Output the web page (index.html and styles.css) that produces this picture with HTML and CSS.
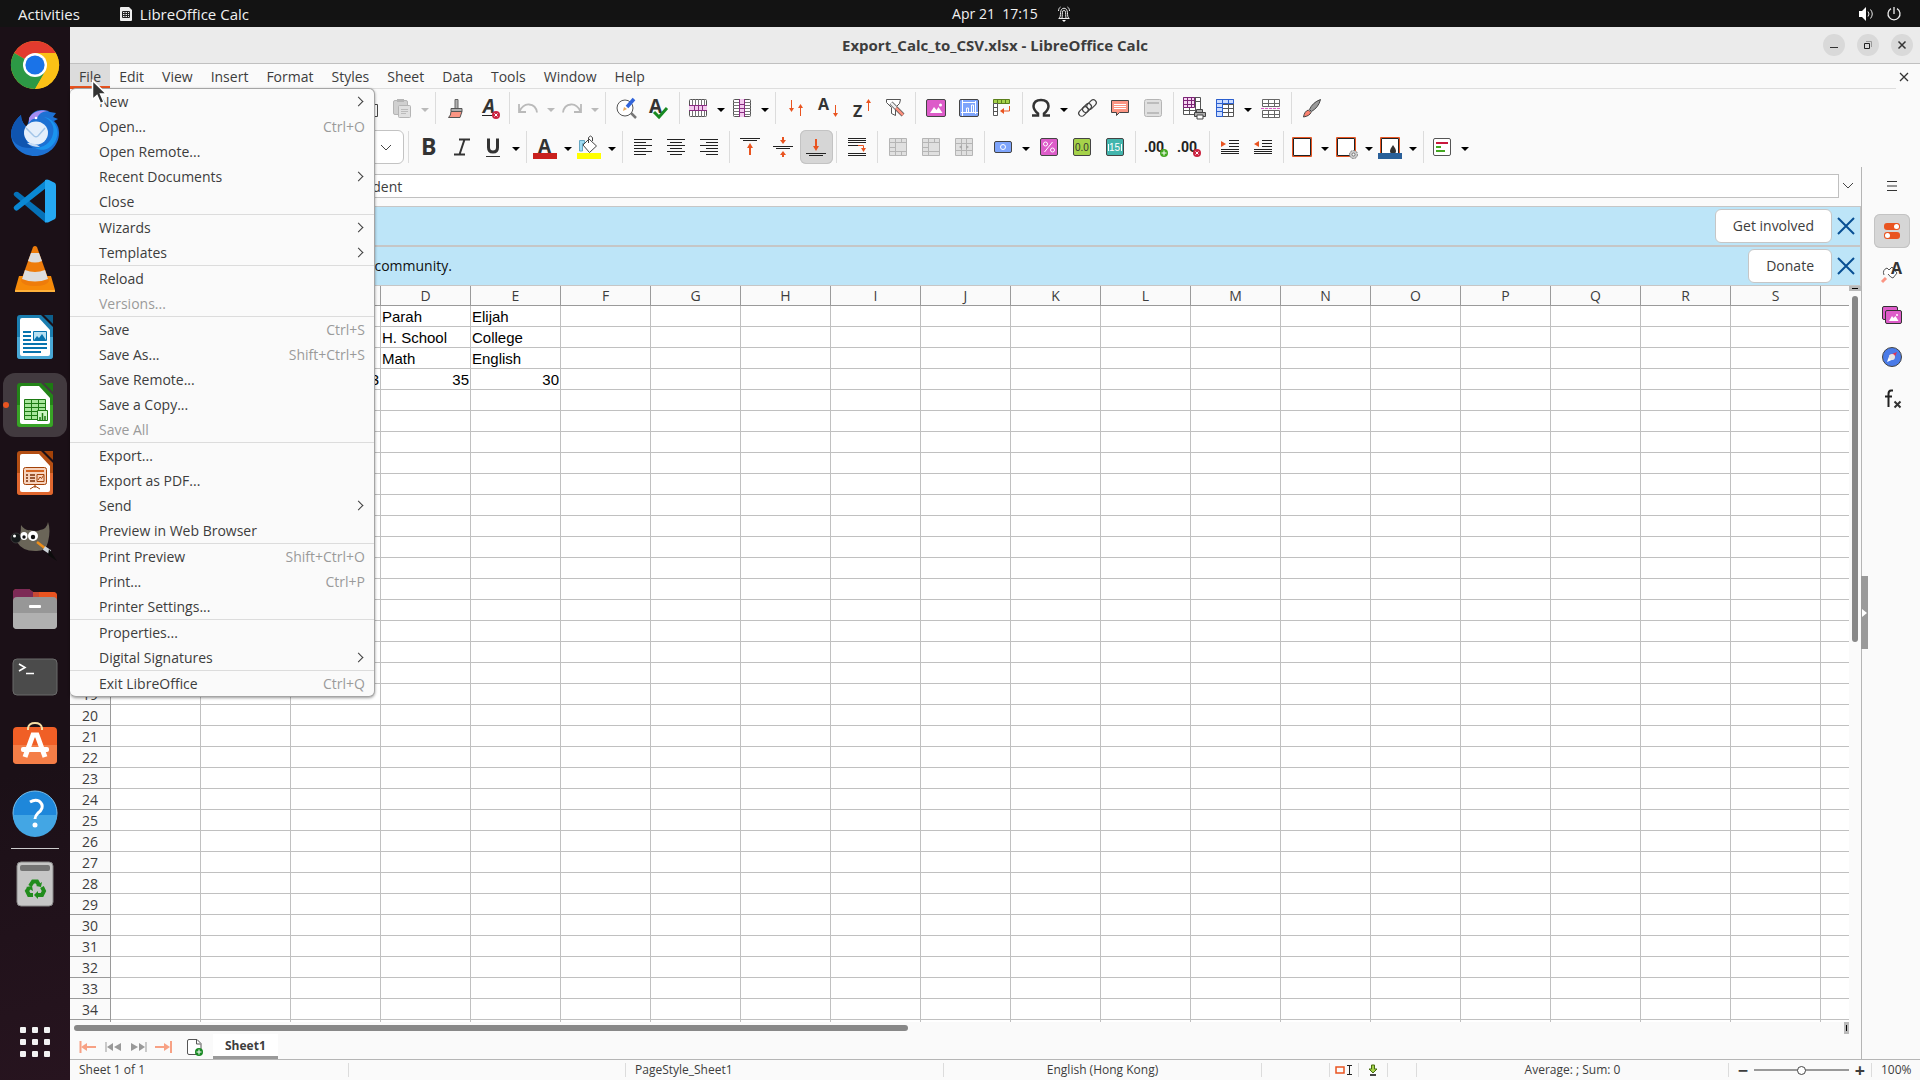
FILE: index.html
```
<!DOCTYPE html>
<html lang="en">
  <head>
    <meta charset="UTF-8" />
    <meta name="viewport" content="width=device-width, initial-scale=1.0" />
    <title>Export_Calc_to_CSV.xlsx - LibreOffice Calc</title>
    <link rel="stylesheet" href="styles.css">
  </head>
  <body>
    <header class="topbar">
      <div class="topbar-left">
        <button class="top-button">Activities</button>
        <button class="top-button app-button">
          <svg width="12" height="14" viewBox="0 0 12 14"><path d="M1 0h8l3 3v10a1 1 0 0 1-1 1H1a1 1 0 0 1-1-1V1a1 1 0 0 1 1-1z" fill="#eee"/><path d="M2.500 4.500h7v6h-7zM2.500 6.500h7M2.500 8.500h7M5 4.500v6M7.500 4.500v6" fill="none" stroke="#222"/></svg>
          LibreOffice Calc
        </button>
      </div>
      <div class="topbar-center">
        <button class="top-button clock">Apr 21&nbsp; 17:15</button>
        <svg width="14" height="16" viewBox="0 0 14 16"><path d="M1.500 12.500h11M2.500 12c1.500-2 .5-5 1.500-7.500 1-3 5-3 6 0 1 2.500 0 5.500 1.500 7.500M5 12c.5-2 0-5 .8-7 .5-1 1.900-1 2.400 0 .8 2 .3 5 .8 7M1.500 5c0-2 1-3.500 2-4M12.500 5c0-2-1-3.500-2-4" fill="none" stroke="#eee"/><path d="M5 14h4l-2 2z" fill="#fff"/></svg>
      </div>
      <div class="topbar-right">
        <svg width="16" height="14" viewBox="0 0 16 14"><path d="M0 4h3l4-4v14l-4-4H0z" fill="#fff"/><path d="M9 4.500q2 2.500 0 5M11.500 2.500q3.500 4.500 0 9" fill="none" stroke="#eee"/></svg>
        <svg width="14" height="14" viewBox="0 0 14 14"><path d="M4 1.600a6 6 0 1 0 6 0M7 0v7" fill="none" stroke="#eee" stroke-width="1.300"/></svg>
      </div>
    </header>

    <div class="desktop">
      <nav class="dock" aria-label="Dock">
        <button class="dock-item" aria-label="Chrome">
          <svg width="48" height="48" viewBox="0 0 48 48"><circle cx="24" cy="24" r="24" fill="#fbc116"/><path d="M24 24 3.200 12A24 24 0 0 1 44.800 12z" fill="#e33b2e"/><path d="M24 24 3.200 12A24 24 0 0 0 24 48l10.400-18z" fill="#2c9945"/><path d="M13.600 30A12 12 0 0 0 34.400 30L24 48z" fill="#2c9945"/><path d="M24 12h20.800A24 24 0 0 1 24 48l10.400-18z" fill="#fbc116"/><circle cx="24" cy="24" r="12" fill="#fff"/><circle cx="24" cy="24" r="9.600" fill="#1a73e8"/></svg>
        </button>
        <button class="dock-item" aria-label="Thunderbird">
          <svg width="48" height="48" viewBox="0 0 48 48"><path d="M10 6C2 13 0 20 0 26c1 12 11 21 24 21s24-10 24-23c0-6-2-9-5-12l4-2-5-2 3-4-6-1c-9-4-18-2-21 7l-2 8c-3-2-6-7-6-12z" fill="#1d71d3"/><path d="M10 6c0 5 3 10 6 13-3 7-2 15 6 20C8 40 0 33 0 24c1-7 4-13 10-18z" fill="#0f55b0"/><path d="M18 9c5-8 14-8 20-7-8 0-11 4-12 8-3-1-6 0-8 4z" fill="#a58df2"/><path d="M33 8c7 3 11 9 9 17-2 9-10 14-18 14 14 7 25-8 22-19-2-7-7-11-13-12z" fill="#1a94ee"/><ellipse cx="25" cy="24" rx="12" ry="11.500" fill="#e5effb"/><path d="m15 19 8 8q2 1.500 4 0l7-8" fill="none" stroke="#a2c5e8" stroke-width="1.500"/><path d="M20 34q6 1 9 4-9 0-13-4z" fill="#c8ddf5"/><circle cx="25" cy="9" r="1.300" fill="#fff"/></svg>
        </button>
        <button class="dock-item" aria-label="Visual Studio Code">
          <svg width="48" height="48" viewBox="0 0 48 48"><path d="M3 16q2-2 4-1l28 22v9L3.500 19q-1.500-1.500-.5-3z" fill="#0571b8"/><path d="M3 32q2 3 4 1l28-22V3L3.500 29q-1.500 1.500-.5 3z" fill="#0a88d4"/><path d="M34 3q2-1 4 0l6 3q1 1 1 3v30q0 2-1 3l-6 3q-2 1-4 0z" fill="#25a8f2"/></svg>
        </button>
        <button class="dock-item" aria-label="VLC">
          <svg width="48" height="48" viewBox="0 0 48 48"><path d="M8 31h32l4 14q0 2-2 2H6q-2 0-2-2z" fill="#f68a09"/><path d="M4 45h40v2H4z" fill="#ffb13b"/><path d="M22 2q2-2 4 0l12 34q-2 5-14 5t-14-5z" fill="#ee7c0b"/><path d="M20 8h8l3 8q-7 3-14 0zM14 25q10 4 20 0l3 9q-13 5-26 0z" fill="#ddd"/></svg>
        </button>
        <button class="dock-item" aria-label="LibreOffice Writer">
          <svg width="48" height="48" viewBox="0 0 48 48"><path d="M9 2h21l12 12v29q0 3-3 3H9q-3 0-3-3V5q0-3 3-3z" fill="#1b7eb0"/><path d="M6 24h36v19q0 3-3 3H9q-3 0-3-3z" fill="#49a8d6"/><path d="M33 2h9v9z" fill="#0d5f8c"/><path d="M11 5h17l11 12v24q0 2-2 2H11q-2 0-2-2V7q0-2 2-2z" fill="#fff"/><path d="M12 19h8M12 23h8M12 27h8M12 31h24M12 35h24M12 39h18" stroke="#0874ae" stroke-width="2"/><path d="M22.500 18.500h13v9h-13z" fill="#b7e0f2" stroke="#0874ae"/><path d="m23 27 3-4 2 2 3-4 4 6z" fill="#0874ae"/></svg>
        </button>
        <button class="dock-item active" aria-label="LibreOffice Calc">
          <svg width="48" height="48" viewBox="0 0 48 48"><path d="M9 2h21l12 12v29q0 3-3 3H9q-3 0-3-3V5q0-3 3-3z" fill="#238418"/><path d="M6 24h36v19q0 3-3 3H9q-3 0-3-3z" fill="#38a426"/><path d="M33 2h9v9z" fill="#1c7a12"/><path d="M11 5h17l11 12v24q0 2-2 2H11q-2 0-2-2V7q0-2 2-2z" fill="#fff"/><path d="M13.500 18.500h21v20h-21zM13.500 22.500h21M13.500 26.500h21M13.500 30.500h21M13.500 34.500h21M20.500 18v20M27.500 18v20" fill="#a6e69a" stroke="#1c7a12"/><path d="M26.500 29.500h10v10h-10z" fill="#ccf4c4" stroke="#1c7a12"/><path d="M29 39v-3M31.500 39v-7M34 39v-4" stroke="#1c7a12" stroke-width="1.500"/></svg>
        </button>
        <button class="dock-item" aria-label="LibreOffice Impress">
          <svg width="48" height="48" viewBox="0 0 48 48"><path d="M9 2h21l12 12v29q0 3-3 3H9q-3 0-3-3V5q0-3 3-3z" fill="#b34e13"/><path d="M6 24h36v19q0 3-3 3H9q-3 0-3-3z" fill="#e0672f"/><path d="M33 2h9v9z" fill="#a34208"/><path d="M11 5h17l11 12v24q0 2-2 2H11q-2 0-2-2V7q0-2 2-2z" fill="#fff"/><rect x="12.500" y="18.500" width="23" height="17" rx="2" fill="#f6d3bd" stroke="#a34208"/><path d="M15 22h18" stroke="#d2621f" stroke-width="2"/><path d="M15 26h2M15 29h2M15 32h2M19 26h5M19 29h5M19 32h5" stroke="#7a2e05" stroke-width="1.500"/><path d="M26 25.500h7v7h-7zM27 31l2-3 1.500 1.500 2-3M24 36v3M24 37l-5 3M24 37l5 3" fill="none" stroke="#a34208"/></svg>
        </button>
        <button class="dock-item" aria-label="GIMP">
          <svg width="48" height="48" viewBox="0 0 48 48"><path d="M10 8q4 6 9 5 7 2 10 0 7-1 8-8 3 8 0 20-2 10-13 9Q11 34 6 25q4-5 4-17z" fill="#6a6558"/><circle cx="5" cy="21" r="5" fill="#15181a" stroke="#555" stroke-width=".5"/><circle cx="3.500" cy="19" r="1.500" fill="#fff"/><ellipse cx="13" cy="19" rx="3.500" ry="4" fill="#fff"/><circle cx="22" cy="19" r="5" fill="#fff"/><circle cx="13" cy="20" r="1.700" fill="#111"/><circle cx="22" cy="20" r="2.200" fill="#111"/><path d="m26 25 9 7" stroke="#ee8e1a" stroke-width="2.500"/><path d="m33 31 6 4" stroke="#ccd3d8" stroke-width="4"/><path d="m38 32 8 12-9-6z" fill="#0c0c0c"/></svg>
        </button>
        <button class="dock-item" aria-label="Files">
          <svg width="48" height="48" viewBox="0 0 48 48"><path d="M2 8q0-4 4-4h12l4 3h20q4 0 4 4v9H2z" fill="#c74a36"/><path d="M2 8q0-4 4-4h12l4 3v8H2z" fill="#7d2a56"/><path d="M28 7h14q4 0 4 4v4H28z" fill="#e95420"/><rect x="2" y="12" width="44" height="32" rx="4" fill="#979797"/><path d="M2 28h44v12q0 4-4 4H6q-4 0-4-4z" fill="#b0b0b0"/><rect x="18" y="20" width="12" height="3" rx="1" fill="#fff"/></svg>
        </button>
        <button class="dock-item" aria-label="Terminal">
          <svg width="48" height="48" viewBox="0 0 48 48"><rect x="2" y="6" width="44" height="36" rx="4" fill="#4b4b4b" stroke="#6a6a6a"/><path d="m8 11 6 3.500L8 18M15 20.500h8" fill="none" stroke="#fff" stroke-width="1.600"/></svg>
        </button>
        <button class="dock-item" aria-label="Ubuntu Software">
          <svg width="48" height="48" viewBox="0 0 48 48"><rect x="2" y="6" width="44" height="37" rx="4" fill="#f05f26"/><path d="M2 24h44v15q0 4-4 4H6q-4 0-4-4z" fill="#f47e47"/><path d="M17 9V7q1-5 7-5t7 5v2" fill="none" stroke="#f8dfa5" stroke-width="2"/><path d="m14 36 8-22h4l8 22" fill="none" stroke="#fff" stroke-width="5"/><rect x="10" y="26" width="28" height="5" rx="2" fill="#fff"/></svg>
        </button>
        <button class="dock-item" aria-label="Help">
          <svg width="48" height="48" viewBox="0 0 48 48"><circle cx="24" cy="24" r="22" fill="#1e87da" stroke="#79c1ef"/><path d="M2 26h44a22 22 0 0 1-44 0z" fill="#43a6e4"/><path d="M19 13q5-3 9-1 4 3 3 7-1 3-4 5-3 3-3 6" fill="none" stroke="#fff" stroke-width="3"/><circle cx="24" cy="36" r="2.500" fill="#fff"/></svg>
        </button>
        <div class="dock-separator"></div>
        <button class="dock-item" aria-label="Trash">
          <svg width="48" height="48" viewBox="0 0 48 48"><rect x="6" y="2" width="36" height="44" rx="4" fill="#c6c6c6" stroke="#888"/><rect x="9" y="5" width="30" height="6" rx="2" fill="#747474"/><g fill="none" stroke="#218c1c" stroke-width="4"><path d="m19 26 3-4.500h4l2 3.500M31 27l2 4-2 4h-5M22 35h-4l-2-4 2-3"/></g><path d="m25 26 5 1 1-5zM27 31v8l-4-4zM15 27l6-1 1 5z" fill="#218c1c"/></svg>
        </button>
        <button class="dock-item show-apps" aria-label="Show Applications">
          <svg width="30" height="30" viewBox="0 0 30 30" fill="#f2f2f2"><rect width="6" height="6" rx="1"/><rect x="12" width="6" height="6" rx="1"/><rect x="24" width="6" height="6" rx="1"/><rect y="12" width="6" height="6" rx="1"/><rect x="12" y="12" width="6" height="6" rx="1"/><rect x="24" y="12" width="6" height="6" rx="1"/><rect y="24" width="6" height="6" rx="1"/><rect x="12" y="24" width="6" height="6" rx="1"/><rect x="24" y="24" width="6" height="6" rx="1"/></svg>
        </button>
      </nav>

      <main class="window">
        <div class="titlebar">
          <h1>Export_Calc_to_CSV.xlsx - LibreOffice Calc</h1>
          <div class="window-buttons">
            <button aria-label="Minimize"><svg width="10" height="10" viewBox="0 0 10 10"><path d="M1 7.500h8" stroke="#333"/></svg></button>
            <button aria-label="Restore"><svg width="10" height="10" viewBox="0 0 10 10"><path d="M1.500 3.500h5v5h-5z" fill="none" stroke="#222"/><path d="M3 1.500h5.500V7" fill="none" stroke="#999"/></svg></button>
            <button aria-label="Close"><svg width="10" height="10" viewBox="0 0 10 10"><path d="m1.500 1.500 7 7m0-7-7 7" stroke="#333" stroke-width="1.500"/></svg></button>
          </div>
        </div>

        <div class="menubar">
          <div class="menus">
            <button class="menu-button open">File</button>
            <button class="menu-button">Edit</button>
            <button class="menu-button">View</button>
            <button class="menu-button">Insert</button>
            <button class="menu-button">Format</button>
            <button class="menu-button">Styles</button>
            <button class="menu-button">Sheet</button>
            <button class="menu-button">Data</button>
            <button class="menu-button">Tools</button>
            <button class="menu-button">Window</button>
            <button class="menu-button">Help</button>
          </div>
          <button class="close-document" aria-label="Close document"><svg width="10" height="10" viewBox="0 0 10 10"><path d="m1 1 8 8m0-8-8 8" stroke="#333" stroke-width="1.300"/></svg></button>

          <ul class="file-menu">
            <li><button>New<span class="arrow"></span></button></li>
            <li><button>Open...<kbd>Ctrl+O</kbd></button></li>
            <li><button>Open Remote...</button></li>
            <li><button>Recent Documents<span class="arrow"></span></button></li>
            <li><button>Close</button></li>
            <li class="group"><button>Wizards<span class="arrow"></span></button></li>
            <li><button>Templates<span class="arrow"></span></button></li>
            <li class="group"><button>Reload</button></li>
            <li><button disabled>Versions...</button></li>
            <li class="group"><button>Save<kbd>Ctrl+S</kbd></button></li>
            <li><button>Save As...<kbd>Shift+Ctrl+S</kbd></button></li>
            <li><button>Save Remote...</button></li>
            <li><button>Save a Copy...</button></li>
            <li><button disabled>Save All</button></li>
            <li class="group"><button>Export...</button></li>
            <li><button>Export as PDF...</button></li>
            <li><button>Send<span class="arrow"></span></button></li>
            <li><button>Preview in Web Browser</button></li>
            <li class="group"><button>Print Preview<kbd>Shift+Ctrl+O</kbd></button></li>
            <li><button>Print...<kbd>Ctrl+P</kbd></button></li>
            <li><button>Printer Settings...</button></li>
            <li class="group"><button>Properties...</button></li>
            <li><button>Digital Signatures<span class="arrow"></span></button></li>
            <li class="group"><button>Exit LibreOffice<kbd>Ctrl+Q</kbd></button></li>
          </ul>
          <svg class="pointer" width="18" height="26" viewBox="0 0 18 26"><path d="M1.500 1.500v19l4.500-4 3.500 8 3.500-1.500-3.500-8h6z" fill="#333" stroke="#fff" stroke-width="1.500"/></svg>
        </div>

        <!-- standard toolbar -->
        <div class="toolbar standard">
          <button class="tool" aria-label="Copy"><svg viewBox="0 0 24 24"><path d="M3.500 3.500h9v12h-9zM8.500 8.500h10v12h-10z" fill="#fff" stroke="#444"/><path d="M11 12.500h5M11 15.500h5" stroke="#9c8fd0"/></svg></button>
          <button class="tool split" aria-label="Paste"><svg viewBox="0 0 24 24"><rect x="3.500" y="4.500" width="14" height="14" rx="1.500" fill="#d0d0d0" stroke="#b5b5b5"/><path d="M7 3h7v3H7z" fill="#b5b5b5"/><rect x="8.500" y="9.500" width="12" height="12" rx="1" fill="#e0e0e0" stroke="#b5b5b5"/><path d="M11 13.500h7M11 15.500h7M11 17.500h5" stroke="#bbb"/></svg><i class="caret dim"></i></button>
          <span class="separator"></span>
          <button class="tool" aria-label="Clone Formatting"><svg viewBox="0 0 24 24"><path d="M11 3.500h3v9h-3z" fill="#b0b0b0" stroke="#666"/><path d="M7 12.500h11v3H7z" fill="#b0b0b0" stroke="#555"/><path d="M7 15.500h11l-2 6H4.500q2.500-2 2.500-6z" fill="#fb9583" stroke="#555"/></svg></button>
          <button class="tool" aria-label="Clear Formatting"><svg viewBox="0 0 24 24"><text x="6" y="17" class="glyph slanted">A</text><path d="M5 19.500h12" stroke="#222"/><circle cx="19" cy="19" r="4" fill="#cb2440"/><path d="m17.500 17.500 3 3m0-3-3 3" stroke="#fff"/></svg></button>
          <span class="separator"></span>
          <button class="tool split" aria-label="Undo"><svg viewBox="0 0 24 24"><path d="M3 8v8h7M3.500 15.500Q7 8 13 8.500q7 .5 8 8" fill="none" stroke="#bababa" stroke-width="1.800"/></svg><i class="caret dim"></i></button>
          <button class="tool split" aria-label="Redo"><svg viewBox="0 0 24 24"><path d="M21 8v8h-7M20.500 15.500Q17 8 11 8.500q-7 .5-8 8" fill="none" stroke="#bababa" stroke-width="1.800"/></svg><i class="caret dim"></i></button>
          <span class="separator"></span>
          <button class="tool" aria-label="Find and Replace"><svg viewBox="0 0 24 24"><circle cx="11" cy="12" r="8" fill="#fff" stroke="#555"/><path d="m17 17 5 5" stroke="#777" stroke-width="2.500"/><path d="m13 11 7-8" stroke="#3164d9" stroke-width="3.500"/><path d="m9 15 1-4 3 2z" fill="#e9a95c"/></svg></button>
          <button class="tool" aria-label="Spelling"><svg viewBox="0 0 24 24"><text x="2" y="17" class="glyph">A</text><path d="m7 16 5 5 8-9" fill="none" stroke="#188a22" stroke-width="3"/></svg></button>
          <span class="separator"></span>
          <button class="tool split" aria-label="Row"><svg viewBox="0 0 24 24"><rect x="3.500" y="3.500" width="17" height="17" rx="1" fill="#fff" stroke="#555"/><path d="M6.500 3v18M9.500 3v18M12.500 3v18M15.500 3v18M18.500 3v18" stroke="#777"/><path d="M3 9.500h18v5H3z" fill="#f3c9ee"/><path d="M3 9.500h18M3 14.500h18M8.500 10v4M12.500 10v4M16.500 10v4" stroke="#8a2c82"/></svg><i class="caret"></i></button>
          <button class="tool split" aria-label="Column"><svg viewBox="0 0 24 24"><rect x="3.500" y="3.500" width="17" height="17" rx="1" fill="#fff" stroke="#555"/><path d="M3 6.500h18M3 9.500h18M3 12.500h18M3 15.500h18M3 18.500h18" stroke="#777"/><path d="M9.500 3h5v18h-5z" fill="#f3c9ee"/><path d="M9.500 3v18M14.500 3v18M10 8.500h4M10 12.500h4M10 16.500h4" stroke="#8a2c82"/></svg><i class="caret"></i></button>
          <span class="separator"></span>
          <button class="tool" aria-label="Sort"><svg viewBox="0 0 24 24"><path d="M7.500 4v10M16.500 20V10" stroke="#e95420"/><path d="M5 12h5l-2.500 4zM14 12h5l-2.500-4z" fill="#e95420"/></svg></button>
          <button class="tool" aria-label="Sort Ascending"><svg viewBox="0 0 24 24"><text x="1" y="14" class="glyph small">A</text><path d="M18.500 9v11" stroke="#e95420"/><path d="M16 17h5l-2.500 4z" fill="#e95420"/></svg></button>
          <button class="tool" aria-label="Sort Descending"><svg viewBox="0 0 24 24"><text x="3" y="21" class="glyph small">Z</text><path d="M18.500 15V5" stroke="#e95420"/><path d="M16 7h5l-2.500-4z" fill="#e95420"/></svg></button>
          <button class="tool" aria-label="AutoFilter"><svg viewBox="0 0 24 24"><path d="M3.500 3.500h14l-1 4-4 4v8l-4-2v-6l-5-5z" fill="#fff" stroke="#555"/><path d="m8 7 12 12" stroke="#555" stroke-width="4"/><path d="m8 7 5 5" stroke="#eee" stroke-width="2.500"/><path d="m13 12 7 7" stroke="#fb8f7d" stroke-width="2.500"/></svg></button>
          <span class="separator"></span>
          <button class="tool" aria-label="Image"><svg viewBox="0 0 24 24"><rect x="2.500" y="3.500" width="19" height="17" rx="1.500" fill="#dd5cc9" stroke="#444"/><path d="m6 17 4-6 2.500 3 2-3 4 6z" fill="#fff"/><circle cx="16.500" cy="9" r="1.500" fill="#fff"/></svg></button>
          <button class="tool" aria-label="Chart"><svg viewBox="0 0 24 24"><rect x="2.500" y="3.500" width="19" height="17" rx="1.500" fill="#7ea4fb" stroke="#444"/><path d="M5.500 6.500h13v10h-13zM9.500 16v-4h2v4M14.500 16V9h2v7M5.500 4v16M4 16.500h17M18.500 5v13" fill="none" stroke="#fff"/></svg></button>
          <button class="tool" aria-label="Pivot Table"><svg viewBox="0 0 24 24"><path d="M3.500 3.500h16v4h-16zM7.500 3.500v4M11.500 3.500v4M15.500 3.500v4" fill="#a5d24a" stroke="#5b7f1c"/><path d="M3.500 7.500h4v12h-4zM3.500 11.500h4M3.500 15.500h4" fill="#fff" stroke="#555"/><path d="M19.500 10v5h-7" fill="none" stroke="#e95420"/><path d="m14 12-4 3 4 3z" fill="#e95420"/></svg></button>
          <span class="separator"></span>
          <button class="tool split" aria-label="Special Character"><svg viewBox="0 0 24 24"><path d="M3 19.500h6v-2Q4.500 14 4.500 10 5 4 12 4t7.500 6q0 4-4.500 7.500v2h6" fill="none" stroke="#333" stroke-width="2.500"/></svg><i class="caret"></i></button>
          <button class="tool" aria-label="Hyperlink"><svg viewBox="0 0 24 24" fill="none" stroke="#444" stroke-width="1.200"><rect x="11" y="5.500" width="11" height="6" rx="3" transform="rotate(-45 16.500 8.500)"/><rect x="7" y="9" width="10" height="6" rx="3" transform="rotate(-45 12 12)"/><rect x="3" y="12.500" width="11" height="6" rx="3" transform="rotate(-45 8.500 15.500)"/></svg></button>
          <button class="tool" aria-label="Comment"><svg viewBox="0 0 24 24"><path d="M3.500 4.500h17v12h-9l-3 3v-3h-5z" fill="#fb9583" stroke="#444"/><path d="M6 8.500h12M6 10.500h12M6 12.500h12" stroke="#fff"/></svg></button>
          <button class="tool" aria-label="Headers and Footers"><svg viewBox="0 0 24 24"><rect x="3.500" y="3.500" width="17" height="17" rx="2" fill="#e0e0e0" stroke="#b5b5b5"/><path d="M6 7h12M6 17h12" stroke="#bcbcbc" stroke-width="2"/></svg></button>
          <span class="separator"></span>
          <button class="tool" aria-label="Define Print Area"><svg viewBox="0 0 24 24"><path d="M1.500 1.500h17v17h-17zM1.500 14.500h17M7.500 10v8M13.500 2v16M13 5.500h5" fill="#fff" stroke="#555"/><path d="M1.500 1.500h11v10h-11zM1.500 4.500h11M1.500 8.500h11M5.500 1.500v10M9.500 1.500v10" fill="#f6d5f2" stroke="#7d2477"/><path d="M14.500 13.500h6v3h-6zM12.500 16.500h11v4h-11z" fill="#aaa" stroke="#444"/><path d="M15 19h6v4h-6z" fill="#fff" stroke="#444"/></svg></button>
          <button class="tool split" aria-label="Freeze Rows and Columns"><svg viewBox="0 0 24 24"><path d="M3.500 3.500h17v17h-17zM9 12.500h12M9 16.500h12M15.500 7v13M9 8.500h12" fill="#fff" stroke="#555"/><path d="M3.500 3.500h17v4h-11v13h-6zM3.500 7.500h6M3.500 11.500h6M3.500 15.500h6M9.500 3.500v4M15.500 3.500v4" fill="#cbdcff" stroke="#2b5fd0"/></svg><i class="caret"></i></button>
          <button class="tool" aria-label="Split Window"><svg viewBox="0 0 24 24"><path d="M3.500 3.500h17v7h-17zM3.500 7.500h17M9.500 3.500v7M15.500 3.500v7M3.500 14.500h17v7h-17zM3.500 18.500h17M9.500 14.500v7M15.500 14.500v7" fill="#fff" stroke="#666"/><path d="M2 12.500h20" stroke="#dd5cc9" stroke-dasharray="3 1"/></svg></button>
          <span class="separator"></span>
          <button class="tool" aria-label="Show Draw Functions"><svg viewBox="0 0 24 24"><path d="M20.500 3.500q-8 3-11 10l2 2q7-4 9-12z" fill="#9a9a9a" stroke="#444"/><path d="M8.500 14q-4 1-5 7 6-1 7.500-4.500z" fill="#fb8270" stroke="#444"/></svg></button>
        </div>

        <!-- formatting toolbar -->
        <div class="toolbar formatting">
          <label class="font-size"><select aria-label="Font size"><option></option></select><svg width="12" height="8" viewBox="0 0 12 8"><path d="m1 1 5 5 5-5" fill="none" stroke="#444"/></svg></label>
          <span class="separator"></span>
          <button class="tool" aria-label="Bold"><svg viewBox="0 0 24 24"><text x="4" y="20" class="glyph large">B</text></svg></button>
          <button class="tool" aria-label="Italic"><svg viewBox="0 0 24 24"><path d="M9 4.500h11M4 19.500h11M14.500 4.500l-5 15" fill="none" stroke="#333" stroke-width="2"/></svg></button>
          <button class="tool split" aria-label="Underline"><svg viewBox="0 0 24 24"><path d="M7.500 3.500v9q0 4.500 4.500 4.500t4.500-4.500v-9" fill="none" stroke="#333" stroke-width="3"/><path d="M5 21.500h14" stroke="#333"/></svg><i class="caret"></i></button>
          <span class="separator"></span>
          <button class="tool split" aria-label="Font Color"><svg viewBox="0 0 24 24"><text x="5" y="18" class="glyph">A</text><path d="M0 18h24v6H0z" fill="#c9211e"/></svg><i class="caret"></i></button>
          <button class="tool split" aria-label="Background Color"><svg viewBox="0 0 24 24"><path d="M2.500 16V5.500h5v3h-2V16z" fill="#9fdcf3" stroke="#67a8c4"/><path d="m6 10 6-6 7.500 7-7 6.500zM11.500 8V2.500q2-3 4 0V6" fill="#fff" stroke="#444"/><path d="M0 18h24v6H0z" fill="#ff0"/></svg><i class="caret"></i></button>
          <span class="separator"></span>
          <button class="tool" aria-label="Align Left"><svg viewBox="0 0 24 24"><path d="M3 4.500h18M3 7.500h12M3 10.500h18M3 13.500h12M3 16.500h18M3 19.500h12" stroke="#222"/></svg></button>
          <button class="tool" aria-label="Center Horizontally"><svg viewBox="0 0 24 24"><path d="M3 4.500h18M6 7.500h12M3 10.500h18M6 13.500h12M3 16.500h18M6 19.500h12" stroke="#222"/></svg></button>
          <button class="tool" aria-label="Align Right"><svg viewBox="0 0 24 24"><path d="M3 4.500h18M9 7.500h12M3 10.500h18M9 13.500h12M3 16.500h18M9 19.500h12" stroke="#222"/></svg></button>
          <span class="separator"></span>
          <button class="tool" aria-label="Align Top"><svg viewBox="0 0 24 24"><path d="M2 3.500h20M5 5.500h14" stroke="#222"/><path d="M12 20v-9" stroke="#e95420" stroke-width="2"/><path d="M9 13h6l-3-5z" fill="#e95420"/></svg></button>
          <button class="tool" aria-label="Center Vertically"><svg viewBox="0 0 24 24"><path d="M2 11.500h20M5 13.500h14" stroke="#222"/><path d="M12 2v4M12 22v-4" stroke="#e95420" stroke-width="2"/><path d="M9 5h6l-3 4zM9 20h6l-3-4z" fill="#e95420"/></svg></button>
          <button class="tool pressed" aria-label="Align Bottom"><svg viewBox="0 0 24 24"><path d="M2 18.500h20M5 20.500h14" stroke="#222"/><path d="M12 4v9" stroke="#e95420" stroke-width="2"/><path d="M9 11h6l-3 5z" fill="#e95420"/></svg></button>
          <span class="separator"></span>
          <button class="tool" aria-label="Wrap Text"><svg viewBox="0 0 24 24"><path d="M3 3.500h18M3 5.500h18M3 7.500h18M3 10.500h10M3 18.500h18M3 20.500h18" stroke="#222"/><path d="M13 10.500h5.500V14" fill="none" stroke="#e95420"/><path d="M16 13h5l-2.500 4z" fill="#e95420"/></svg></button>
          <span class="separator"></span>
          <button class="tool" aria-label="Merge and Center"><svg viewBox="0 0 24 24"><path d="M3.500 3.500h17v17h-17zM3.500 7.500h17M3.500 16.500h17M9.500 3.500v17M15.500 3.500v4M15.500 16.500v4M3.500 12.500h6" fill="#e0e0e0" stroke="#b5b5b5"/></svg></button>
          <button class="tool" aria-label="Merge Cells"><svg viewBox="0 0 24 24"><path d="M3.500 3.500h17v17h-17zM3.500 7.500h17M3.500 16.500h17M9.500 3.500v17M15.500 3.500v4M3.500 12.500h6" fill="#e0e0e0" stroke="#b5b5b5"/></svg></button>
          <button class="tool" aria-label="Unmerge Cells"><svg viewBox="0 0 24 24"><path d="M3.500 3.500h17v17h-17zM3.500 8.500h17M3.500 15.500h17M9.500 3.500v17M14.500 3.500v17" fill="#e0e0e0" stroke="#b5b5b5"/><path d="m7 12 3-2v4zM17 12l-3-2v4z" fill="#aaa"/></svg></button>
          <span class="separator"></span>
          <button class="tool split" aria-label="Format as Currency"><svg viewBox="0 0 24 24"><rect x="3.500" y="6.500" width="17" height="11" rx="1.500" fill="#7ea4fb" stroke="#444"/><circle cx="12" cy="12" r="2.500" fill="none" stroke="#fff"/></svg><i class="caret"></i></button>
          <button class="tool" aria-label="Format as Percent"><svg viewBox="0 0 24 24"><rect x="3.500" y="3.500" width="17" height="17" rx="1.500" fill="#dd5cc9" stroke="#444"/><path d="m7.500 17 8-10" stroke="#fff"/><circle cx="8.500" cy="9" r="2" fill="none" stroke="#fff"/><circle cx="15.500" cy="15" r="2" fill="none" stroke="#fff"/></svg></button>
          <button class="tool" aria-label="Format as Number"><svg viewBox="0 0 24 24"><rect x="3.500" y="3.500" width="17" height="17" rx="1.500" fill="#a5d24a" stroke="#444"/><text x="5" y="16" class="digits">0.0</text></svg></button>
          <button class="tool" aria-label="Format as Date"><svg viewBox="0 0 24 24"><rect x="3.500" y="3.500" width="17" height="17" rx="1.500" fill="#43b5ad" stroke="#444"/><path d="M5.500 9v7M18.500 9v7" stroke="#fff"/><text x="6" y="16" class="digits light">15</text></svg></button>
          <span class="separator"></span>
          <button class="tool" aria-label="Add Decimal Place"><svg viewBox="0 0 24 24"><text x="0" y="17" class="decimals">.00</text><circle cx="20" cy="18" r="4" fill="#43a820"/><path d="M17.500 18h5M20 15.500v5" stroke="#fff"/></svg></button>
          <button class="tool" aria-label="Delete Decimal Place"><svg viewBox="0 0 24 24"><text x="0" y="17" class="decimals">.00</text><circle cx="20" cy="18" r="4" fill="#cb2440"/><path d="m18.500 16.500 3 3m0-3-3 3" stroke="#fff"/></svg></button>
          <span class="separator"></span>
          <button class="tool" aria-label="Increase Indent"><svg viewBox="0 0 24 24"><path d="M11 5.500h10M11 8.500h10M11 11.500h10M3 14.500h18M3 16.500h18M3 18.500h18" stroke="#222"/><path d="M3 6v6l5-3z" fill="#e95420"/></svg></button>
          <button class="tool" aria-label="Decrease Indent"><svg viewBox="0 0 24 24"><path d="M11 5.500h10M11 8.500h10M11 11.500h10M3 14.500h18M3 16.500h18M3 18.500h18" stroke="#222"/><path d="M8 6v6L3 9z" fill="#e95420"/></svg></button>
          <span class="separator"></span>
          <button class="tool split" aria-label="Borders"><svg viewBox="0 0 24 24"><path d="M2.500 2.500h19v19h-19z" fill="#fff" stroke="#e95420"/><path d="M3.500 3.500h17v17h-17z" fill="none" stroke="#222"/></svg><i class="caret"></i></button>
          <button class="tool split" aria-label="Border Style"><svg viewBox="0 0 24 24"><path d="M2.500 2.500h19v19h-19z" fill="#fff" stroke="#e95420"/><path d="M3.500 3.500h17v17h-17z" fill="none" stroke="#222"/><circle cx="19.500" cy="19.500" r="4" fill="#ccc" stroke="#777" stroke-dasharray="2 1"/><circle cx="19.500" cy="19.500" r="1.500" fill="#fff" stroke="#777"/></svg><i class="caret"></i></button>
          <button class="tool split" aria-label="Border Color"><svg viewBox="0 0 24 24"><path d="M2.500 2.500h19v19h-19z" fill="#fff" stroke="#e95420"/><path d="M3.500 3.500h17v17h-17z" fill="none" stroke="#222"/><path d="M15 10q3 4 3 6a3 3 0 0 1-6 0q0-2 3-6z" fill="#333"/><path d="M0 18h24v6H0z" fill="#2a6099"/></svg><i class="caret"></i></button>
          <span class="separator"></span>
          <button class="tool split" aria-label="Conditional"><svg viewBox="0 0 24 24"><rect x="3.500" y="3.500" width="17" height="17" rx="1.500" fill="#fff" stroke="#555"/><path d="M6 8h12" stroke="#c8193c" stroke-width="2"/><path d="M6 12h5M6 16h9" stroke="#43a820" stroke-width="2"/></svg><i class="caret"></i></button>
        </div>

        <div class="workspace">
          <div class="document">
            <div class="formula-bar">
              <input type="text" value="Student" aria-label="Input line">
              <button aria-label="Expand Formula Bar"><svg width="12" height="8" viewBox="0 0 12 8"><path d="m1 1 5 5 5-5" fill="none" stroke="#444"/></svg></button>
            </div>
            <div class="infobar">
              <button class="info-button">Get involved</button>
              <button class="info-close" aria-label="Close Infobar"><svg width="16" height="16" viewBox="0 0 16 16"><path d="m0 0 16 16m0-16L0 16" stroke="#074f94" stroke-width="2"/></svg></button>
            </div>
            <div class="infobar">
              <p>Your donations support our worldwide community.</p>
              <button class="info-button">Donate</button>
              <button class="info-close" aria-label="Close Infobar"><svg width="16" height="16" viewBox="0 0 16 16"><path d="m0 0 16 16m0-16L0 16" stroke="#074f94" stroke-width="2"/></svg></button>
            </div>
            <div class="sheet-area">
              <div class="sheet-view">
                <table class="sheet" id="sheet"></table>
              </div>
              <div class="scroll-vertical">
                <span class="splitter"></span>
                <span class="thumb"></span>
              </div>
            </div>
            <div class="scroll-horizontal">
              <span class="thumb"></span>
              <span class="splitter"></span>
            </div>
            <div class="sheet-tabs">
              <button class="tab-nav" aria-label="First sheet"><svg width="18" height="12" viewBox="0 0 18 12"><path d="M1.500 0v12" stroke="#f7a184" stroke-width="2"/><path d="M5 6h12" stroke="#f7a184" stroke-width="2"/><path d="m8 2-6 4 6 4z" fill="#f7a184"/></svg></button>
              <button class="tab-nav" aria-label="Previous sheet"><svg width="18" height="12" viewBox="0 0 18 12"><path d="M2 1v10" stroke="#999"/><path d="m9 2-6 4 6 4zM17 2l-7 4 7 4z" fill="#999"/></svg></button>
              <button class="tab-nav" aria-label="Next sheet"><svg width="18" height="12" viewBox="0 0 18 12"><path d="M17 1v10" stroke="#999"/><path d="m10 2 6 4-6 4zM2 2l7 4-7 4z" fill="#999"/></svg></button>
              <button class="tab-nav" aria-label="Last sheet"><svg width="18" height="12" viewBox="0 0 18 12"><path d="M17 0v12M1 6h12" stroke="#f7a184" stroke-width="2"/><path d="m10 2 6 4-6 4z" fill="#f7a184"/></svg></button>
              <button class="tab-add" aria-label="Add sheet"><svg width="16" height="18" viewBox="0 0 16 18"><path d="M2 1.500h8l4 4V15q0 1.500-1.500 1.500H2Q.5 16.500.5 15V3Q.5 1.500 2 1.500zM9.500 2v4h4" fill="#fff" stroke="#555"/><circle cx="12" cy="14" r="4" fill="#188a22"/><path d="M9.500 14h5M12 11.500v5" stroke="#fff"/></svg></button>
              <button class="tab current">Sheet1</button>
            </div>
          </div>

          <aside class="sidebar">
            <button class="deck-handle" aria-label="Hide sidebar"></button>
            <button class="deck settings" aria-label="Sidebar Settings"><svg width="10" height="10" viewBox="0 0 10 10"><path d="M0 .5h10M0 5h10M0 9.500h10" stroke="#333"/></svg></button>
            <button class="deck pressed" aria-label="Properties"><svg width="24" height="24" viewBox="0 0 24 24"><rect x="4" y="4" width="16" height="7" rx="3" fill="#e95420"/><rect x="4" y="13" width="16" height="7" rx="3" fill="#e95420"/><circle cx="16.500" cy="7.500" r="2.500" fill="#fff"/><circle cx="7.500" cy="16.500" r="2.500" fill="#fff"/></svg></button>
            <button class="deck" aria-label="Styles"><svg width="24" height="24" viewBox="0 0 24 24"><path d="m2 21 4-4" stroke="#fb9583" stroke-width="3"/><path d="M4 14q-2-5 3-7l2 2 3-3 5 6-4 5q-2 0-5-4" fill="#fff" stroke="#555"/><text x="11" y="13" class="glyph small">A</text></svg></button>
            <button class="deck" aria-label="Gallery"><svg width="24" height="24" viewBox="0 0 24 24"><rect x="2.500" y="3.500" width="15" height="13" rx="1.500" fill="#dd5cc9" stroke="#333"/><rect x="5.500" y="7.500" width="16" height="13" rx="1.500" fill="#dd5cc9" stroke="#333"/><path d="m9 18 3-5 1.500 2 2-2 3 5z" fill="#fff"/><circle cx="17" cy="12" r="1" fill="#fff"/></svg></button>
            <button class="deck" aria-label="Navigator"><svg width="24" height="24" viewBox="0 0 24 24"><circle cx="12" cy="12" r="9.500" fill="#4a7be8" stroke="#444"/><path d="m7 17 2.500-7 4.500 4z" fill="#fff"/><path d="m17 7-7.500 3 4.500 4z" fill="#e3304f"/><circle cx="12" cy="12" r="3" fill="#e5e5e5"/></svg></button>
            <button class="deck" aria-label="Functions"><svg width="24" height="24" viewBox="0 0 24 24"><path d="M13 3.500h-2Q8.500 3.500 8.500 7v13M5 9.500h7" fill="none" stroke="#222" stroke-width="2"/><path d="m14.500 14.500 6 6m0-6-6 6" stroke="#333" stroke-width="2"/></svg></button>
          </aside>
        </div>

        <footer class="statusbar">
          <span class="status">Sheet 1 of 1</span>
          <span class="status"></span>
          <span class="status">PageStyle_Sheet1</span>
          <span class="status centered">English (Hong Kong)</span>
          <span class="status"></span>
          <span class="status centered"><svg width="18" height="12" viewBox="0 0 18 12"><path d="M1 3h8v6H1z" fill="none" stroke="#e95420" stroke-width="1.500"/><path d="M12 1.500h5M12 10.500h5M14.500 2v8" stroke="#222"/></svg></span>
          <span class="status centered"><svg width="10" height="12" viewBox="0 0 10 12"><path d="M3.500 1h3v4h2.500l-4 4-4-4h2.500z" fill="#a5d24a" stroke="#456b10"/><path d="M2 11h6" stroke="#444" stroke-width="2"/></svg></span>
          <span class="status"></span>
          <span class="status centered">Average: ; Sum: 0</span>
          <span class="status zoom">
            <button aria-label="Zoom out">&minus;</button>
            <input type="range" min="0" max="100" value="50" aria-label="Zoom">
            <button aria-label="Zoom in">+</button>
          </span>
          <span class="status">100%</span>
        </footer>
      </main>
    </div>
    <script src="script.js"></script>
  </body>
</html>
```

FILE: styles.css
```
* {
  box-sizing: border-box;
}

body {
  margin: 0;
  height: 100vh;
  display: flex;
  flex-direction: column;
  overflow: hidden;
  font-family: "Open Sans", "Noto Sans", sans-serif;
  font-size: 14px;
  line-height: 20px;
  color: #3d3d3d;
  background: #1b1017;
}

button,
input,
select {
  font: inherit;
  color: inherit;
}

button {
  display: flex;
  align-items: center;
  justify-content: center;
  padding: 0;
  border: none;
  background: none;
  white-space: nowrap;
}

svg {
  display: block;
  flex: none;
  overflow: visible;
}

/* top panel */
.topbar {
  display: grid;
  grid-template-columns: 1fr auto 1fr;
  align-items: center;
  height: 27px;
  flex: none;
  background: #131313;
  color: #f0f0f0;
}

.topbar-left,
.topbar-center,
.topbar-right {
  display: flex;
  align-items: center;
}

.topbar-left {
  padding-left: 18px;
  gap: 40px;
  font-size: 15px;
}

.app-button {
  gap: 8px;
}

.topbar-center {
  padding-left: 103px;
  gap: 19px;
}

.topbar-right {
  justify-content: flex-end;
  gap: 12px;
  padding-right: 19px;
}

.desktop {
  flex: 1;
  min-height: 0;
  display: flex;
}

/* dock */
.dock {
  width: 70px;
  flex: none;
  display: flex;
  flex-direction: column;
  align-items: center;
  padding: 4px 3px;
  background: linear-gradient(165deg, #1b1017 70%, #27141f);
}

.dock-item {
  position: relative;
  width: 64px;
  height: 64px;
  flex: none;
  margin: 2px 0;
  border-radius: 12px;
}

.dock-item.active {
  background: #423a3f;
}

.dock-item.active::before {
  content: "";
  position: absolute;
  left: 0;
  top: 29px;
  width: 6px;
  height: 6px;
  border-radius: 3px;
  background: #e95420;
}

.dock-separator {
  width: 48px;
  height: 1px;
  flex: none;
  margin: 1px 0;
  background: #ccc;
}

.show-apps {
  margin-top: auto;
}

/* window */
.window {
  flex: 1;
  min-width: 0;
  display: flex;
  flex-direction: column;
  background: #fafafa;
}

.titlebar {
  position: relative;
  display: flex;
  align-items: center;
  justify-content: center;
  height: 37px;
  flex: none;
  background: #ebebeb;
  border-bottom: 1px solid #c0c0c0;
}

.titlebar h1 {
  margin: 0;
  font-size: 15px;
  font-weight: 700;
}

.window-buttons {
  position: absolute;
  right: 7px;
  display: flex;
  gap: 12px;
}

.window-buttons button {
  width: 22px;
  height: 22px;
  border-radius: 11px;
  background: #d9d9d9;
}

.menubar {
  position: relative;
  display: flex;
  height: 25px;
  flex: none;
}

.menus {
  flex: 1;
  display: flex;
  border-bottom: 1px solid #dedede;
}

.menu-button {
  padding: 0 9px;
  height: 25px;
}

.menu-button.open {
  background: #dcdcdc;
  box-shadow: inset 0 -3px #e95420;
}

.close-document {
  width: 24px;
  padding-right: 8px;
}

.file-menu {
  position: absolute;
  z-index: 2;
  left: 0;
  top: 24px;
  width: 305px;
  margin: 0;
  padding: 0;
  list-style: none;
  background: #fafafa;
  border: 1px solid #a5a5a5;
  border-left: none;
  border-radius: 6px;
  box-shadow: 0 1px 3px rgba(0, 0, 0, 0.4);
}

.file-menu .group {
  border-top: 1px solid #dcdcdc;
}

.file-menu button {
  justify-content: space-between;
  width: 100%;
  height: 25px;
  padding: 0 9px 0 29px;
}

.file-menu button:disabled,
.file-menu kbd {
  font-family: inherit;
  color: #9a9a9a;
}

.arrow {
  width: 7px;
  height: 7px;
  margin-right: 3px;
  border-top: 1px solid #3d3d3d;
  border-right: 1px solid #3d3d3d;
  transform: rotate(45deg);
}

.pointer {
  position: absolute;
  z-index: 3;
  left: 21px;
  top: 15px;
}

/* toolbars */
.toolbar {
  display: flex;
  align-items: center;
  height: 38px;
  flex: none;
}

.standard {
  padding-left: 285px;
}

.formatting {
  height: 40px;
  padding-left: 214px;
}

.tool {
  justify-content: flex-start;
  width: 33px;
  height: 34px;
  flex: none;
  padding-left: 4px;
  border-radius: 6px;
}

.tool svg {
  width: 24px;
  height: 24px;
}

.tool.split {
  width: 44px;
  padding-left: 2px;
  gap: 7px;
}

.tool.pressed,
.deck.pressed {
  background: #d6d6d6;
  box-shadow: inset 0 0 0 1px #c3c3c3;
}

.caret {
  border: 4px solid transparent;
  border-top-color: #000;
  border-bottom: none;
  margin-top: 3px;
}

.caret.dim {
  border-top-color: #bababa;
}

.separator {
  width: 1px;
  height: 32px;
  flex: none;
  margin: 0 4px 0 3px;
  background: #dcdcdc;
}

.glyph {
  font-size: 19px;
  font-weight: 700;
  fill: #333;
}

.glyph.slanted {
  font-style: italic;
}

.glyph.small {
  font-size: 16px;
}

.glyph.large {
  font-size: 23px;
}

.digits {
  font-family: "Liberation Sans", sans-serif;
  font-size: 10px;
  fill: #333;
}

.digits.light {
  fill: #fff;
}

.decimals {
  font-family: "Roboto", sans-serif;
  font-size: 14px;
  font-weight: 700;
  fill: #222;
}

.font-size {
  position: relative;
  width: 120px;
  margin-right: 1px;
}

.font-size select {
  display: block;
  width: 100%;
  height: 34px;
  appearance: none;
  background: #fff;
  border: 1px solid #c3c3c3;
  border-radius: 6px;
}

.font-size svg {
  position: absolute;
  right: 12px;
  top: 14px;
}

/* document */
.workspace {
  flex: 1;
  min-height: 0;
  display: flex;
}

.document {
  flex: 1;
  min-width: 0;
  display: flex;
  flex-direction: column;
}

.formula-bar {
  display: flex;
  align-items: center;
  height: 39px;
  flex: none;
  padding: 0 0 1px 260px;
}

.formula-bar input {
  flex: 1;
  min-width: 0;
  height: 24px;
  padding: 0 20px;
  background: #fff;
  border: 1px solid #c0c0c0;
}

.formula-bar button {
  width: 22px;
  height: 24px;
  padding-right: 4px;
}

.infobar {
  display: flex;
  align-items: center;
  height: 40px;
  flex: none;
  padding-left: 48px;
  background: #bde5f8;
  border: 1px solid #c6c6c6;
  border-left: none;
}

.infobar p {
  margin: 0;
  color: #111;
}

.info-button {
  height: 34px;
  margin-left: auto;
  padding: 0 17px;
  background: #fff;
  border: 1px solid #c6c6c6;
  border-radius: 6px;
}

.info-close {
  width: 28px;
  height: 34px;
}

.sheet-area {
  flex: 1;
  min-height: 0;
  display: flex;
}

.sheet-view {
  flex: 1;
  min-width: 0;
  overflow: hidden;
  background: #fff;
}

.sheet {
  width: max-content;
  table-layout: fixed;
  border-collapse: separate;
  border-spacing: 0;
}

.sheet th {
  height: 21px;
  padding: 1px 0 0;
  font-weight: 400;
  line-height: 19px;
  background: #fafafa;
  border-right: 1px solid #9a9a9a;
  border-bottom: 1px solid #9a9a9a;
}

.sheet thead th {
  width: 90px;
  height: 20px;
  padding: 0;
}

.sheet thead th:first-child {
  width: 41px;
}

.sheet td {
  padding: 2px 1px 0;
  font-family: "Liberation Sans", Arial, sans-serif;
  font-size: 15px;
  line-height: 18px;
  color: #000;
  border-right: 1px solid #c0c0c0;
  border-bottom: 1px solid #c0c0c0;
}

.sheet td.number {
  text-align: right;
}

.scroll-vertical {
  width: 12px;
  flex: none;
  display: flex;
  flex-direction: column;
  align-items: center;
}

.thumb {
  border-radius: 3px;
  background: #888;
}

.splitter {
  background: #000;
  border: solid #bababa;
}

.scroll-vertical .splitter {
  width: 12px;
  height: 5px;
  border-width: 2px 3px;
}

.scroll-vertical .thumb {
  width: 6px;
  height: 47%;
  margin-top: 5px;
}

.scroll-horizontal {
  display: flex;
  align-items: center;
  justify-content: space-between;
  height: 12px;
  flex: none;
  padding: 0 12px 0 4px;
}

.scroll-horizontal .thumb {
  width: 47%;
  height: 6px;
}

.scroll-horizontal .splitter {
  width: 5px;
  height: 12px;
  border-width: 3px 2px;
}

.sheet-tabs {
  display: flex;
  align-items: center;
  height: 25px;
  flex: none;
  padding-left: 9px;
}

.tab-nav {
  width: 25px;
  justify-content: flex-start;
}

.tab-add {
  width: 20px;
  margin: 0 8px 0 6px;
}

.tab {
  height: 25px;
  padding: 0 12px 2px;
  background: #fff;
  font-size: 12px;
  font-weight: 700;
  box-shadow: inset 0 -3px #9a9a9a;
}

/* sidebar */
.sidebar {
  position: relative;
  width: 59px;
  flex: none;
  display: flex;
  flex-direction: column;
  align-items: center;
  gap: 8px;
  padding: 2px 0 0 2px;
  border-left: 1px solid #b5b5b5;
}

.deck {
  width: 36px;
  height: 34px;
  border-radius: 6px;
}

.deck.settings {
  margin-bottom: 3px;
}

.deck-handle {
  position: absolute;
  left: -1px;
  top: 409px;
  width: 7px;
  height: 73px;
  background: #9a9a9a;
}

.deck-handle::before {
  content: "";
  border: 4px solid transparent;
  border-left: 5px solid #fff;
  border-right: none;
}

/* status bar */
.statusbar {
  display: grid;
  grid-template-columns: 279fr 277fr 318fr 318fr 68fr 29fr 29fr 29fr 312fr 143fr 48fr;
  align-items: center;
  height: 21px;
  flex: none;
  border-top: 1px solid #b5b5b5;
  font-size: 12px;
}

.status {
  display: flex;
  align-items: center;
  height: 14px;
  min-width: 0;
  padding-left: 9px;
  border-right: 1px solid #dcdcdc;
  white-space: nowrap;
}

.status:last-child {
  border-right: none;
}

.status.centered {
  justify-content: center;
  padding: 0;
}

.status.zoom {
  padding-right: 6px;
}

.zoom button {
  width: 10px;
  font-size: 18px;
  font-weight: 700;
}

.zoom input {
  flex: 1;
  min-width: 0;
  height: 12px;
  margin: 0 6px;
  appearance: none;
  background: linear-gradient(#999, #999) center / 100% 2px no-repeat;
}

.zoom input::-webkit-slider-thumb {
  appearance: none;
  width: 9px;
  height: 9px;
  border: 1px solid #444;
  border-radius: 5px;
  background: #fff;
}
```

FILE: script.js
```
const columns = "ABCDEFGHIJKLMNOPQRST".split("");
const rowCount = 35;

// Cell contents, keyed by address
const cells = {
  D1: "Parah",
  E1: "Elijah",
  D2: "H. School",
  E2: "College",
  D3: "Math",
  E3: "English",
  C4: 33,
  D4: 35,
  E4: 30,
};

const sheet = document.getElementById("sheet");

const head = sheet.createTHead().insertRow();
head.innerHTML = "<th></th>" + columns.map((c) => `<th>${c}</th>`).join("");

const body = sheet.createTBody();
for (let r = 1; r <= rowCount; r++) {
  const row = body.insertRow();
  let html = `<th>${r}</th>`;
  columns.forEach((c) => {
    const value = cells[c + r] ?? "";
    const type = typeof value === "number" ? ' class="number"' : "";
    html += `<td${type}>${value}</td>`;
  });
  row.innerHTML = html;
}
```
